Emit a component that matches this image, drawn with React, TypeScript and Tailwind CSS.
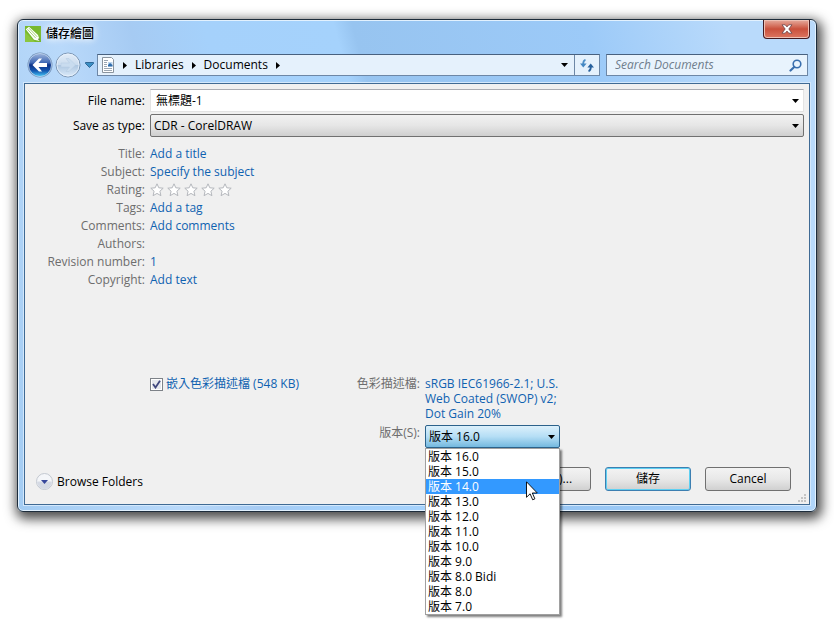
import { useState } from "react";

const details: ReadonlyArray<{ label: string; value: string }> = [
  { label: "Title:", value: "Add a title" },
  { label: "Subject:", value: "Specify the subject" },
  { label: "Rating:", value: "" },
  { label: "Tags:", value: "Add a tag" },
  { label: "Comments:", value: "Add comments" },
  { label: "Authors:", value: "" },
  { label: "Revision number:", value: "1" },
  { label: "Copyright:", value: "Add text" },
];

const versions = [
  "16.0",
  "15.0",
  "14.0",
  "13.0",
  "12.0",
  "11.0",
  "10.0",
  "9.0",
  "8.0 Bidi",
  "8.0",
  "7.0",
];

const Caret = ({ className = "" }: { className?: string }) => (
  <svg viewBox="0 0 7 4" className={`h-1 w-[7px] ${className}`} aria-hidden="true">
    <path d="M0 0h7L3.5 4z" fill="currentColor" />
  </svg>
);

const Crumb = () => (
  <svg viewBox="0 0 4 7" className="h-[7px] w-1 shrink-0" aria-hidden="true">
    <path d="M0 0v7l4-3.5z" fill="#000" />
  </svg>
);

const AppIcon = () => (
  <svg viewBox="0 0 16 16" className="size-4" aria-hidden="true">
    <rect width="16" height="16" fill="#78b92e" />
    <path d="M0 16V6l10 10z" fill="#8cc63f" />
    <path d="M.8 3.200 4 .8l9 8.200 2 6-6-1.300z" fill="#fff" />
    <path d="m2.400 3.200 8.400 9M4 2.200l8.200 8.600" stroke="#8fc750" strokeWidth=".8" />
    <path d="m12.800 13 2.400 2.200-.8-3z" fill="#4b7f1a" />
  </svg>
);

const NavButtons = () => (
  <div className="flex h-[26px] items-center gap-[2px]">
    <button type="button" aria-label="Back" className="size-[26px]">
      <svg viewBox="0 0 26 26">
        <defs>
          <linearGradient id="back" x2="0" y2="1">
            <stop offset="0" stopColor="#9db4dc" />
            <stop offset=".4" stopColor="#3f68b3" />
            <stop offset=".5" stopColor="#0d3387" />
            <stop offset=".75" stopColor="#1457b0" />
            <stop offset="1" stopColor="#45c8f7" />
          </linearGradient>
        </defs>
        <circle cx="13" cy="13" r="12.500" fill="#6f8fb8" />
        <circle cx="13" cy="13" r="11.500" fill="url(#back)" stroke="#c3d8ef" strokeWidth=".8" />
        <path d="m5.500 13 6.500-6.500h3L11.500 11H20v4h-8.500l3.500 4.500h-3z" fill="#fff" />
      </svg>
    </button>
    <button type="button" aria-label="Forward" className="size-[26px]">
      <svg viewBox="0 0 26 26">
        <defs>
          <linearGradient id="forward" x2="0" y2="1">
            <stop offset="0" stopColor="#e3edf8" />
            <stop offset=".48" stopColor="#cbdcee" />
            <stop offset=".52" stopColor="#afc8e2" />
            <stop offset="1" stopColor="#dcebfa" />
          </linearGradient>
        </defs>
        <circle cx="13" cy="13" r="12" fill="url(#forward)" stroke="#7d97b5" />
        <circle cx="13" cy="13" r="11" fill="none" stroke="#e9f3fc" strokeWidth=".8" />
        <path
          d="M20.500 13 14 6.500h-3l3.500 4.500H6v4h8.500L11 19.500h3z"
          fill="#c9dcef"
          stroke="#b4cae1"
          strokeWidth=".5"
        />
      </svg>
    </button>
    <button type="button" aria-label="Recent pages" className="ml-[2px] h-[26px] w-[9px]">
      <svg viewBox="0 0 9 6" className="h-[6px] w-[9px]">
        <path d="M.5.5h8v1l-4 4-4-4z" fill="#3b8fc4" stroke="#1d5685" strokeWidth=".8" />
      </svg>
    </button>
  </div>
);

const DocumentIcon = () => (
  <svg viewBox="0 0 14 16" className="h-4 w-[14px] shrink-0" aria-hidden="true">
    <path d="M1.500.5h9l2 2v13h-11z" fill="#fff" stroke="#8a949e" />
    <path d="M3 3.500h4M3 5.500h3M3 7.500h3M3 9.500h3M3 11.500h8M3 13.500h8" stroke="#9aa6b2" />
    <rect x="7" y="5" width="4.500" height="4.500" fill="#bcd6ee" />
    <path d="M7 9.500V8l2-2 2.500 2v1.500z" fill="#2f6cab" />
  </svg>
);

const RefreshIcon = () => (
  <svg viewBox="0 0 14 13" className="h-[13px] w-[14px]" aria-hidden="true">
    <path d="M5.500.8C3.600 1.300 3.200 2.800 3.200 5" fill="none" stroke="#4d8fc7" strokeWidth="1.800" />
    <path d="M0 4.500h6.600L3.300 8.500z" fill="#4487c2" />
    <path d="M8.500 12.200c1.900-.5 2.300-2 2.300-4.200" fill="none" stroke="#27609c" strokeWidth="1.800" />
    <path d="M7.400 8.500H14l-3.300-4z" fill="#27609c" />
  </svg>
);

const SearchIcon = () => (
  <svg viewBox="0 0 13 13" className="size-[13px]" aria-hidden="true">
    <circle cx="8" cy="5" r="3.800" fill="#eaf4fd" stroke="#3a6fae" strokeWidth="1.600" />
    <path d="M5.200 8 1.500 11.500" stroke="#3a6fae" strokeWidth="2.200" strokeLinecap="round" />
  </svg>
);

const Star = () => (
  <svg viewBox="0 0 14 14" className="size-[14px]" aria-hidden="true">
    <path
      d="m7 .8 1.800 4 4.400.4-3.300 3 1 4.500L7 10.400l-3.900 2.300 1-4.500-3.300-3 4.400-.4z"
      fill="#fff"
      stroke="#b4b7bc"
    />
  </svg>
);

const Rating = () => (
  <div className="flex gap-[3px] pt-[2px]">
    {[1, 2, 3, 4, 5].map((n) => (
      <button key={n} type="button" aria-label={`${n} stars`}>
        <Star />
      </button>
    ))}
  </div>
);

const TitleBar = () => (
  <header className="flex h-[31px] items-start justify-between">
    <div className="flex items-center gap-[5px] pt-[6px] pl-[1px]">
      <AppIcon />
      <h1 className="text-xs leading-4 font-medium [text-shadow:0_0_6px_#fff,0_0_10px_#fff]">
        儲存繪圖
      </h1>
    </div>
    <button
      type="button"
      aria-label="Close"
      className="flex h-[19px] w-[47px] items-center justify-center rounded-b-[4px] border border-t-0 border-[#431a20] bg-linear-to-b from-[#e5aa9d] from-0% via-[#c9503c] via-50% to-[#dc7560] shadow-[inset_0_0_0_1px_#eec0b4]"
    >
      <svg viewBox="0 0 12 10" className="h-[10px] w-3">
        <path
          d="M1 .8h3.200L6 2.900 7.800.8H11L7.800 5 11 9.200H7.800L6 7.100 4.200 9.200H1L4.200 5z"
          fill="#fff"
          stroke="#6b4348"
          strokeWidth=".8"
        />
      </svg>
    </button>
  </header>
);

const AddressBar = () => (
  <nav className="flex h-8 items-start gap-[3px] pr-[2px] pl-[3px]">
    <div className="pt-[1px]">
      <NavButtons />
    </div>
    <div className="mt-[3px] flex h-[22px] flex-1 border border-[#6d87a6] border-t-[#48617f] bg-[#e5f1fc]">
      <div className="flex flex-1 items-center gap-2 pl-[3px]">
        <DocumentIcon />
        <Crumb />
        <a href="#libraries">Libraries</a>
        <Crumb />
        <a href="#documents">Documents</a>
        <Crumb />
      </div>
      <button type="button" aria-label="Previous locations" className="flex w-5 items-center justify-center">
        <Caret />
      </button>
      <button
        type="button"
        aria-label="Refresh"
        className="flex w-[25px] items-center justify-center border-l border-[#6d87a6]"
      >
        <RefreshIcon />
      </button>
    </div>
    <div className="mt-[3px] ml-[3px] flex h-[22px] w-[202px] items-center border border-[#6d87a6] border-t-[#48617f] bg-[#e8f3fd] pr-[5px] pl-2">
      <input
        type="search"
        aria-label="Search Documents"
        placeholder="Search Documents"
        className="min-w-0 flex-1 italic outline-none placeholder:text-[#6f7d8c]"
      />
      <button type="button" aria-label="Search">
        <SearchIcon />
      </button>
    </div>
  </nav>
);

const FileFields = () => (
  <div className="grid grid-cols-[120px_1fr] items-center gap-x-[5px] gap-y-[2px] pt-[5px] pr-[5px]">
    <label htmlFor="file-name" className="text-right">
      File name:
    </label>
    <div className="flex h-[23px] items-center border border-[#e3e3e3] border-t-[#abadb3] bg-white pr-1">
      <input
        id="file-name"
        defaultValue="無標題-1"
        className="min-w-0 flex-1 px-[5px] outline-none"
      />
      <button type="button" aria-label="Previous file names">
        <Caret />
      </button>
    </div>
    <label htmlFor="file-type" className="text-right">
      Save as type:
    </label>
    <div className="relative">
      <select
        id="file-type"
        className="block h-[23px] w-full appearance-none rounded-[2px] border border-[#707070] bg-linear-to-b from-[#f2f2f2] via-[#e6e6e6] via-50% to-[#cfcfcf] px-[3px]"
      >
        <option>CDR - CorelDRAW</option>
      </select>
      <Caret className="pointer-events-none absolute top-[10px] right-[5px]" />
    </div>
  </div>
);

const Details = () => (
  <dl className="grid grid-cols-[120px_1fr] gap-x-[5px] pt-2 leading-[18px]">
    {details.map(({ label, value }) => (
      <div key={label} className="contents">
        <dt className="text-right text-[#6d6d6d]">{label}</dt>
        <dd className="text-[#0f62b0]">
          {label === "Rating:" ? <Rating /> : value}
        </dd>
      </div>
    ))}
  </dl>
);

const VersionPicker = () => {
  const [selected, setSelected] = useState("16.0");

  return (
    <div className="relative w-[135px]">
      <select
        id="version"
        value={selected}
        onChange={(event) => setSelected(event.target.value)}
        className="block h-[23px] w-full appearance-none rounded-[2px] border border-[#2c628b] bg-linear-to-b from-[#dcf0fb] via-[#b5def5] via-50% to-[#73b9df] px-[3px]"
      >
        {versions.map((version) => (
          <option key={version} value={version}>
            {`版本 ${version}`}
          </option>
        ))}
      </select>
      <Caret className="pointer-events-none absolute top-[10px] right-[5px]" />
      <ul
        role="listbox"
        aria-label="版本"
        className="absolute top-[23px] left-0 z-10 w-full border border-[#a0a0a0] bg-white leading-[15px] shadow-[2px_2px_2px_rgba(0,0,0,0.5)]"
      >
        {versions.map((version) => (
          <li
            key={version}
            role="option"
            aria-selected={version === "14.0"}
            onClick={() => setSelected(version)}
            className="pl-[2px] aria-selected:bg-[#3399ff] aria-selected:text-white"
          >
            {`版本 ${version}`}
          </li>
        ))}
      </ul>
      <svg
        viewBox="0 0 12 20"
        className="absolute top-[56px] left-[101px] z-20 h-5 w-3"
        aria-hidden="true"
      >
        <path
          d="M.5.8v15.500l3.600-3.500 2.600 6 2.200-1-2.600-5.800h5z"
          fill="#fff"
          stroke="#000"
          strokeWidth=".9"
        />
      </svg>
    </div>
  );
};

const ProfileOptions = () => (
  <div className="grid grid-cols-[270px_1fr] pt-[86px] pl-[125px]">
    <label className="flex items-center gap-[3px] self-start leading-[18px] text-[#0f62b0]">
      <input
        type="checkbox"
        defaultChecked
        className="peer size-[13px] appearance-none border border-[#7d8288] bg-[#e6e9ee] shadow-[inset_0_0_0_1px_#fff]"
      />
      <svg
        viewBox="0 0 9 9"
        className="pointer-events-none invisible -ml-[14px] mr-[2px] size-[9px] peer-checked:visible"
        aria-hidden="true"
      >
        <path d="m1 4 2.500 3.500L8 .8" fill="none" stroke="#40487f" strokeWidth="1.800" />
      </svg>
      嵌入色彩描述檔 (548 KB)
    </label>
    <div className="-ml-[70px] grid grid-cols-[70px_1fr] gap-x-[5px]">
      <span className="text-right leading-[18px] text-[#6d6d6d]">色彩描述檔:</span>
      <p className="w-[135px] pt-[1px] leading-[15px] text-[#0f62b0]">
        sRGB IEC61966-2.1; U.S. Web Coated (SWOP) v2; Dot Gain 20%
      </p>
      <label htmlFor="version" className="pt-1 text-right text-[#6d6d6d]">
        版本(S):
      </label>
      <div className="pt-1">
        <VersionPicker />
      </div>
    </div>
  </div>
);

const buttonClass =
  "h-6 w-[86px] rounded-[3px] border bg-linear-to-b from-[#f3f3f3] via-[#e8e8e8] via-50% to-[#d0d0d0]";

const Footer = () => (
  <footer className="flex items-start justify-between pt-[19px] pr-[18px] pb-[13px] pl-[11px]">
    <button type="button" className="mt-[6px] flex items-center gap-1">
      <svg viewBox="0 0 17 17" className="size-[17px]" aria-hidden="true">
        <circle cx="8.500" cy="8.500" r="8" fill="#f4f6f9" stroke="#c3c8d0" />
        <path d="M1 8.500a7.500 7.500 0 0 0 15 0z" fill="#d5dae4" />
        <path d="M5 7h7l-3.500 4z" fill="#37479b" />
      </svg>
      Browse Folders
    </button>
    <div className="flex gap-[14px]">
      <button type="button" className={`${buttonClass} border-[#707070]`}>
        進階(A)...
      </button>
      <button
        type="button"
        className={`${buttonClass} border-[#3c7fb1] shadow-[inset_0_0_0_1px_#5fd0f2]`}
      >
        儲存
      </button>
      <button type="button" className={`${buttonClass} border-[#707070]`}>
        Cancel
      </button>
    </div>
  </footer>
);

const App = () => {
  return (
    <main className="bg-white px-[17px] pt-[19px] pb-[117px] font-['Open_Sans','Noto_Sans_CJK_TC',sans-serif] text-xs text-black">
      <section className="rounded-[6px] border border-[#1d2c3b] bg-[linear-gradient(75deg,#a3ccf3_0%,#b9d9fa_18%,#a6cbf3_26%,#a5d1fb_34%,#a5d2fc_48%,#97c4f0_50%,#9ccaf8_75%,#b9dafb_90%)] px-[6px] pb-[6px] shadow-[inset_0_0_0_1px_#e2f1fe,2px_4px_12px_3px_rgba(0,0,0,0.7)]">
        <TitleBar />
        <AddressBar />
        <div className="relative border border-[#3f6a94] bg-[#f0f0f0] shadow-[0_0_0_1px_#d3e8fc]">
          <FileFields />
          <Details />
          <ProfileOptions />
          <Footer />
          <svg
            viewBox="0 0 9 9"
            className="absolute right-[2px] bottom-[1px] size-[9px]"
            aria-hidden="true"
          >
            <path
              d="M6 0h2v2H6zM3 3h2v2H3zM6 3h2v2H6zM0 6h2v2H0zM3 6h2v2H3zM6 6h2v2H6z"
              fill="#c4c4c4"
            />
          </svg>
        </div>
      </section>
    </main>
  );
};

export default App;
